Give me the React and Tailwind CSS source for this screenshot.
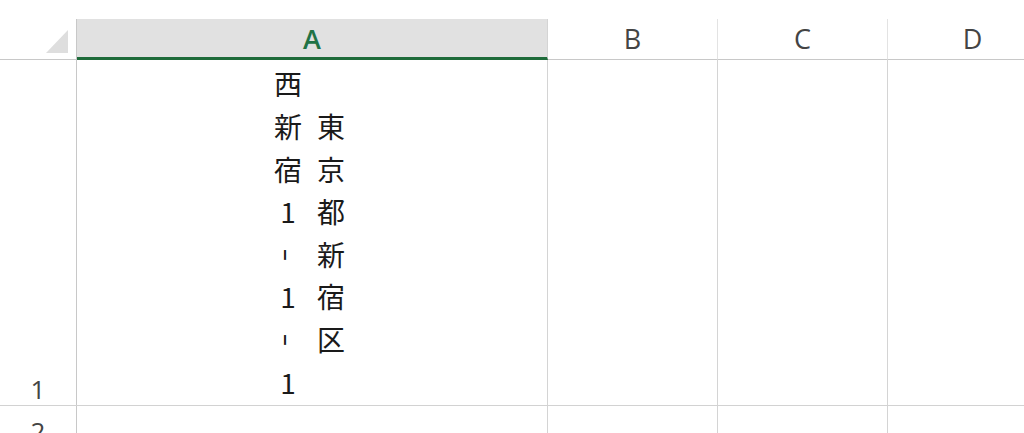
import React from "react";

const LEFT = ["西", "新", "宿", "1", "-", "1", "-", "1"];
const RIGHT = ["東", "京", "都", "新", "宿", "区"];

function Ch({ c }) {
  return (
    <div className="h-[42.6px] w-[43px] flex items-center justify-center leading-none">
      {c === "-" ? (
        <span className="inline-block rotate-90 text-[40px] leading-none font-light translate-x-[3px] translate-y-[1px]">-</span>
      ) : (
        <span>{c}</span>
      )}
    </div>
  );
}

export default function App() {
  return (
    <div
      className="w-[1024px] h-[433px] overflow-hidden bg-white"
      style={{ fontFamily: '"Open Sans", "Noto Sans", "Noto Sans CJK JP", sans-serif' }}
    >
      <div className="h-[19px]" />
      {/* header row */}
      <div className="flex h-[41px]">
        <div className="w-[77px] shrink-0 border-r border-b border-[#c8c8c8] flex items-end justify-end pr-[8px] pb-[6px]">
          <svg width="22" height="23" viewBox="0 0 22 23">
            <polygon points="22,0 22,23 0,23" fill="#dedede" />
          </svg>
        </div>
        <div className="w-[471px] shrink-0 bg-[#e1e1e1] border-r border-[#d4d4d4] border-b-[3px] border-b-[#1e6b3a] flex items-center justify-center text-[27px] font-semibold text-[#217346] leading-none">
          A
        </div>
        <div className="w-[170px] shrink-0 border-r border-b border-r-[#e3e3e3] border-b-[#c8c8c8] flex items-center justify-center text-[27px] text-[#444] leading-none pb-[2px]">
          B
        </div>
        <div className="w-[170px] shrink-0 border-r border-b border-r-[#e3e3e3] border-b-[#c8c8c8] flex items-center justify-center text-[27px] text-[#444] leading-none pb-[2px]">
          C
        </div>
        <div className="w-[170px] shrink-0 border-r border-b border-r-[#e3e3e3] border-b-[#c8c8c8] flex items-center justify-center text-[27px] text-[#444] leading-none pb-[2px]">
          D
        </div>
        <div className="flex-1 border-b border-[#c8c8c8]" />
      </div>
      {/* row 1 */}
      <div className="flex h-[346px] border-b border-[#d2d2d2]">
        <div className="w-[77px] shrink-0 border-r border-[#c8c8c8] flex items-end justify-center pb-[3px] text-[26px] text-[#444] leading-none">
          1
        </div>
        <div
          className="w-[471px] shrink-0 border-r border-[#d4d4d4] flex items-center justify-center pr-[5px] text-[28px] text-[#1a1a1a]"
          style={{ fontFamily: '"Noto Sans CJK JP", sans-serif' }}
        >
          <div className="flex flex-col">
            {LEFT.map((c, i) => (
              <Ch key={i} c={c} />
            ))}
          </div>
          <div className="flex flex-col">
            {RIGHT.map((c, i) => (
              <Ch key={i} c={c} />
            ))}
          </div>
        </div>
        <div className="w-[170px] shrink-0 border-r border-[#d4d4d4]" />
        <div className="w-[170px] shrink-0 border-r border-[#d4d4d4]" />
        <div className="w-[170px] shrink-0 border-r border-[#d4d4d4]" />
        <div className="flex-1" />
      </div>
      {/* row 2 */}
      <div className="flex h-[42px]">
        <div className="w-[77px] shrink-0 border-r border-[#c8c8c8] flex items-end justify-center pb-[4px] text-[26px] text-[#444] leading-none">
          2
        </div>
        <div className="w-[471px] shrink-0 border-r border-[#d4d4d4]" />
        <div className="w-[170px] shrink-0 border-r border-[#d4d4d4]" />
        <div className="w-[170px] shrink-0 border-r border-[#d4d4d4]" />
        <div className="w-[170px] shrink-0 border-r border-[#d4d4d4]" />
        <div className="flex-1" />
      </div>
    </div>
  );
}
